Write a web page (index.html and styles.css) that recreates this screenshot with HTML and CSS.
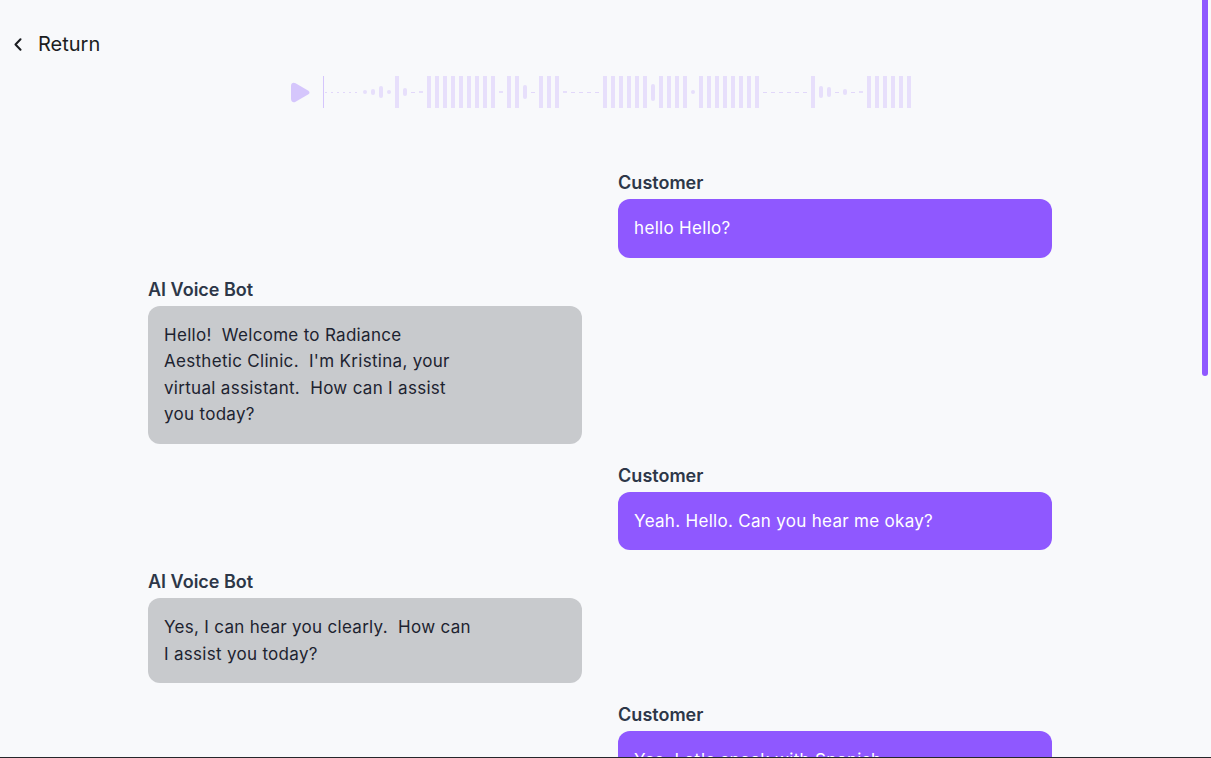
FILE: index.html
```html
<!DOCTYPE html>
<html lang="en">
<head>
<meta charset="utf-8">
<title>Call transcript</title>
<link rel="stylesheet" href="styles.css">
</head>
<body>
<div class="page">
  <header class="topbar">
    <a class="back" href="#">
      <svg class="chev" width="8" height="13" viewBox="0 0 8 13"><polyline points="6.5,1.2 1.5,6.5 6.5,11.8" fill="none" stroke="#1b1d21" stroke-width="2" stroke-linecap="round" stroke-linejoin="round"/></svg>
      <span>Return</span>
    </a>
  </header>

  <div class="wave">
    <svg class="play" width="20" height="21" viewBox="0 0 20 21"><path d="M1 4 C1 1.2 3.2 0 5.6 1.3 L18 8.4 C20 9.6 20 11.4 18 12.6 L5.6 19.7 C3.2 21 1 19.8 1 17 Z" fill="#d5c6fc"/></svg>
    <div class="cursor"></div>
    <div class="lead"></div>
    <div class="bars">
      <i class="d"></i><i class="h6"></i><i class="h12"></i><i class="d"></i><i class="b"></i><i class="h8"></i><i class="t"></i><i class="s"></i>
      <i class="b"></i><i class="b"></i><i class="b"></i><i class="b"></i><i class="b"></i><i class="b"></i><i class="b"></i><i class="b"></i><i class="b"></i>
      <i class="s"></i><i class="b"></i><i class="b"></i><i class="h14"></i><i class="t"></i>
      <i class="b"></i><i class="b"></i><i class="b"></i>
      <i class="s"></i><i class="t"></i><i class="t"></i><i class="t"></i><i class="t"></i>
      <i class="b"></i><i class="b"></i><i class="b"></i><i class="b"></i><i class="b"></i><i class="b"></i>
      <i class="h17"></i>
      <i class="b"></i><i class="b"></i><i class="b"></i><i class="b"></i>
      <i class="d"></i>
      <i class="b"></i><i class="b"></i><i class="b"></i><i class="b"></i><i class="b"></i><i class="b"></i><i class="b"></i><i class="b"></i>
      <i class="t"></i><i class="t"></i><i class="t"></i><i class="t"></i><i class="t"></i><i class="t"></i>
      <i class="b"></i><i class="h12"></i><i class="h10"></i><i class="t"></i><i class="h6"></i><i class="t"></i><i class="s"></i>
      <i class="b"></i><i class="b"></i><i class="b"></i><i class="b"></i><i class="b"></i><i class="b"></i>
    </div>
  </div>

  <main class="chat">
    <div class="msg customer">
      <div class="who">Customer</div>
      <div class="bubble">hello Hello?</div>
    </div>
    <div class="msg bot">
      <div class="who">AI Voice Bot</div>
      <div class="bubble">Hello!&nbsp; Welcome to Radiance<br>Aesthetic Clinic.&nbsp; I'm Kristina, your<br>virtual assistant.&nbsp; How can I assist<br>you today?</div>
    </div>
    <div class="msg customer">
      <div class="who">Customer</div>
      <div class="bubble">Yeah. Hello. Can you hear me okay?</div>
    </div>
    <div class="msg bot">
      <div class="who">AI Voice Bot</div>
      <div class="bubble">Yes, I can hear you clearly.&nbsp; How can<br>I assist you today?</div>
    </div>
    <div class="msg customer">
      <div class="who">Customer</div>
      <div class="bubble">Yes. Let's speak with Spanish.</div>
    </div>
  </main>
</div>
<div class="scroll-thumb"></div>
<div class="edge"></div>
</body>
</html>
```

FILE: styles.css
```css
html {
  background: #f8f9fb;
  overflow: hidden;
}
body {
  margin: 0;
  font-family: Inter, "Noto Sans", sans-serif;
  color: #1b1d21;
}
.page {
  padding-right: 11px;
  min-height: 1528px;
}
.topbar {
  padding: 32px 14px 0;
}
.back {
  display: inline-flex;
  align-items: center;
  gap: 16px;
  color: #1b1d21;
  text-decoration: none;
  font-size: 20px;
  line-height: 24px;
}
.chev {
  display: block;
}
.wave {
  margin-top: 20px;
  height: 32px;
  display: flex;
  align-items: center;
  justify-content: center;
}
.play {
  display: block;
  margin-right: 13px;
}
.cursor {
  width: 1px;
  height: 32px;
  background: #d5c6fc;
}
.lead {
  width: 35px;
  height: 1px;
  background: repeating-linear-gradient(to right, transparent 0 1px, #e2d8fa 1px 3px, transparent 3px 6px);
}
.bars {
  display: flex;
  align-items: center;
  gap: 4px;
  margin-left: 4px;
}
.bars i {
  display: block;
  width: 4px;
  background: #e7dffb;
}
.bars .b { height: 32px; }
.bars .h17 { height: 17px; border-radius: 2px; }
.bars .h14 { height: 14px; border-radius: 2px; }
.bars .h12 { height: 12px; border-radius: 2px; }
.bars .h10 { height: 10px; border-radius: 2px; }
.bars .h8 { height: 8px; border-radius: 2px; }
.bars .h6 { height: 6px; border-radius: 2px; }
.bars .d { height: 4px; border-radius: 2px; }
.bars .s { height: 2px; }
.bars .t { height: 1px; background: #e2d8fa; }

.chat {
  width: 904px;
  margin: 63px auto 0;
  display: flex;
  flex-direction: column;
  gap: 20px;
}
.msg {
  width: 48%;
  display: flex;
  flex-direction: column;
}
.msg.customer {
  align-self: flex-end;
}
.who {
  font-size: 18px;
  line-height: 24px;
  font-weight: 600;
  color: #2d3748;
  margin-bottom: 4px;
}
.bubble {
  border-radius: 12px;
  padding: 16px;
  font-size: 17px;
  letter-spacing: 0.3px;
  line-height: 26.5px;
}
.customer .bubble {
  background: #8f58ff;
  color: #ffffff;
}
.bot .bubble {
  background: #c8cacd;
  color: #1d2330;
}
.scroll-thumb {
  position: fixed;
  top: 0;
  right: 3px;
  width: 6px;
  height: 376px;
  background: #8f58ff;
  border-radius: 0 0 3px 3px;
}
.edge {
  position: fixed;
  left: 0;
  right: 0;
  bottom: 0;
  height: 1px;
  background: #26272b;
}
```
